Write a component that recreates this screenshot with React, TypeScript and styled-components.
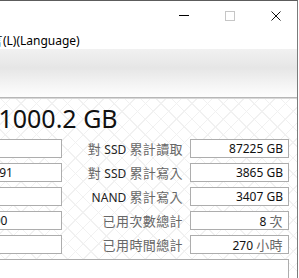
import React from "react";
import styled, { createGlobalStyle } from "styled-components";

const GlobalStyle = createGlobalStyle`
  html, body { margin: 0; padding: 0; background: #fff; overflow: hidden; }
  body { font-family: "Noto Sans", "Noto Sans CJK TC", sans-serif; color: #111; }
`;

const Viewport = styled.div`
  width: 299px;
  height: 278px;
  overflow: hidden;
  background: #fff;
`;

const Window = styled.div`
  box-sizing: border-box;
  width: 802px;
  height: 278px;
  margin-left: -504px;
  border-top: 1px solid #5c5c5c;
  border-right: 1px solid #7b7b7b;
  background: #fff;
  display: flex;
  flex-direction: column;
`;

const TitleBar = styled.div`
  height: 30px;
  display: flex;
  justify-content: flex-end;
  margin-right: -2px;
`;

const CaptionButton = styled.div`
  width: 46px;
  height: 30px;
  display: flex;
  align-items: center;
  justify-content: center;
`;

const MenuBar = styled.div`
  height: 18px;
  display: flex;
  padding-left: 9px;
  font-size: 12px;
  line-height: 18px;
  color: #000;
  white-space: nowrap;
`;

const MenuItem = styled.span`
  padding: 0 17px;
`;

const DriveStrip = styled.div`
  height: 48px;
  flex: none;
  background: linear-gradient(to bottom, #f1f1f1 0px, #e6e6e6 19px, #f6f6f6 38px, #fdfdfd 48px);
  border-bottom: 1px solid #b7b7b7;
`;

const Content = styled.div`
  flex: 1;
  border-top: 1px solid #d8d8d8;
  padding: 0 8px;
  background-color: #fff;
  background-image:
    repeating-linear-gradient(45deg, transparent 0 10px, #f1f1f1 10px 11px),
    repeating-linear-gradient(-45deg, transparent 0 10px, #f1f1f1 10px 11px);
`;

const ModelTitle = styled.div`
  margin-top: 3px;
  text-align: center;
  font-size: 25px;
  line-height: 32px;
  color: #111;
  white-space: nowrap;
`;

const InfoGrid = styled.div`
  margin-top: 5px;
  display: grid;
  grid-template-columns: 1fr 226px 128px 99px;
  grid-auto-rows: 19px;
  row-gap: 5px;
  font-size: 12px;
`;

const Label = styled.div`
  text-align: right;
  line-height: 19px;
  padding-right: 7px;
  color: #222;
  white-space: nowrap;
`;

const ValueBox = styled.div<{ $align: "left" | "center" | "right"; $span?: number; $tall?: boolean }>`
  box-sizing: border-box;
  border: 1px solid #adadad;
  background: #fff;
  line-height: 17px;
  padding: 0 5px;
  color: #111;
  white-space: nowrap;
  overflow: hidden;
  text-align: ${(p) => p.$align};
  grid-column: ${(p) => (p.$span ? `span ${p.$span}` : "auto")};
  height: ${(p) => (p.$tall ? "40px" : "19px")};
`;

const Cjk = styled.span<{ $muted: boolean }>`
  font-family: "Noto Sans CJK TC", sans-serif;
  font-size: 13px;
  letter-spacing: 0.4px;
  color: ${(p) => (p.$muted ? "#676767" : "inherit")};
`;

const CJK_RE = /([\u3400-\u9fff\uf900-\ufaff]+)/;

function Mixed({ text, muted = false }: { text: string; muted?: boolean }) {
  return (
    <>
      {text
        .split(CJK_RE)
        .filter(Boolean)
        .map((part, i) =>
          CJK_RE.test(part) ? (
            <Cjk key={i} $muted={muted}>
              {part}
            </Cjk>
          ) : (
            <React.Fragment key={i}>{part}</React.Fragment>
          )
        )}
    </>
  );
}

const rows = [
  { l: "韌體", lv: "RVT04B6Q", r: "對 SSD 累計讀取", rv: "87225 GB" },
  { l: "序號", lv: "S3Z9NB0KA704123791", r: "對 SSD 累計寫入", rv: "3865 GB" },
  { l: "介面", lv: "Serial ATA", r: "NAND 累計寫入", rv: "3407 GB" },
  { l: "傳輸模式", lv: "SATA/600 | SATA/600", r: "已用次數總計", rv: "8 次" },
  { l: "磁碟代號", lv: "C:", r: "已用時間總計", rv: "270 小時" },
];

const menus = ["檔案(F)", "編輯(E)", "功能(U)", "主題(T)", "磁碟(D)", "說明(H)", "語言(L)(Language)"];

export default function App() {
  return (
    <Viewport>
      <GlobalStyle />
      <Window>
        <TitleBar>
          <CaptionButton>
            <svg width="10" height="10" viewBox="0 0 10 10">
              <rect x="0" y="4" width="10" height="1" fill="#000" />
            </svg>
          </CaptionButton>
          <CaptionButton>
            <svg width="10" height="10" viewBox="0 0 10 10">
              <rect x="0.5" y="0.5" width="9" height="9" fill="none" stroke="#c6c6c6" strokeWidth="1" />
            </svg>
          </CaptionButton>
          <CaptionButton>
            <svg width="10" height="10" viewBox="0 0 10 10">
              <path d="M0.5 0.5 L9.5 9.5 M9.5 0.5 L0.5 9.5" stroke="#111" strokeWidth="1" fill="none" />
            </svg>
          </CaptionButton>
        </TitleBar>
        <MenuBar>
          {menus.map((m) => (
            <MenuItem key={m}>
              <Mixed text={m} />
            </MenuItem>
          ))}
        </MenuBar>
        <DriveStrip />
        <Content>
          <ModelTitle>Samsung SSD 860 EVO 1TB 1000.2 GB</ModelTitle>
          <InfoGrid>
            {rows.map((row) => (
              <React.Fragment key={row.r}>
                <Label>
                  <Mixed text={row.l} muted />
                </Label>
                <ValueBox $align="center">{row.lv}</ValueBox>
                <Label>
                  <Mixed text={row.r} muted />
                </Label>
                <ValueBox $align="right">
                  <Mixed text={row.rv} muted />
                </ValueBox>
              </React.Fragment>
            ))}
            <Label>
              <Mixed text="支援的標準" muted />
            </Label>
            <ValueBox $align="left" $span={3} $tall>
              ACS-2 | ACS-4
            </ValueBox>
          </InfoGrid>
        </Content>
      </Window>
    </Viewport>
  );
}
